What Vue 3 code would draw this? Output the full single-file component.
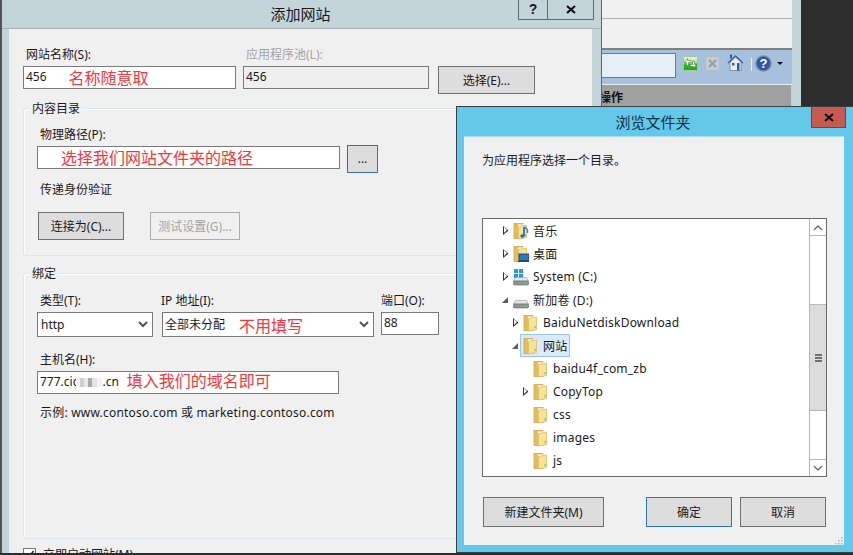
<template>
  <div class="desktop">
    <!-- 后面的 IIS 管理器窗口 -->
    <div class="manager-window">
      <div class="manager-main">
        <div class="manager-menu"></div>
        <div class="manager-blank"></div>
        <div class="manager-toolbar">
          <div class="address-input"></div>
          <svg class="tool-icon" width="15" height="15" viewBox="0 0 15 15">
            <defs>
              <linearGradient id="greenBtn" x1="0" y1="0" x2="0" y2="1">
                <stop offset="0" stop-color="#eef8e8" />
                <stop offset="0.45" stop-color="#a4e088" />
                <stop offset="0.55" stop-color="#2cc418" />
                <stop offset="1" stop-color="#10b00c" />
              </linearGradient>
            </defs>
            <rect x="0.5" y="0.5" width="14" height="14" rx="1" fill="url(#greenBtn)" stroke="#a8c4a0" />
            <path d="M1.5 6.5 L4.5 2.5 L4.5 4.5 L8 4.5 L8 6.5 L5.5 6.5 L5.5 9.5 L3.5 9.5 L3.5 6.5 Z" fill="#fff" stroke="#1b4a14" stroke-width="0.4" />
            <path d="M13.5 8.5 L10.5 12.5 L10.5 10.5 L7 10.5 L7 8.5 L9.5 8.5 L9.5 5.5 L11.5 5.5 L11.5 8.5 Z" fill="#fff" stroke="#1b4a14" stroke-width="0.4" />
          </svg>
          <svg class="tool-icon" width="15" height="15" viewBox="0 0 15 15">
            <rect x="0.5" y="0.5" width="14" height="14" rx="1" fill="#c4ccd4" stroke="#b4bcc4" />
            <path d="M4 4 L11 11 M11 4 L4 11" stroke="#98a0a8" stroke-width="2.4" />
          </svg>
          <svg class="tool-icon home" width="17" height="17" viewBox="0 0 17 17">
            <path d="M3 8 L3 16.5 L14 16.5 L14 8 L8.5 3 Z" fill="#e8edf2" stroke="#6f8296" stroke-width="0.8" />
            <path d="M1 9 L8.5 2 L16 9" fill="none" stroke="#3b62b8" stroke-width="1.6" />
            <rect x="3" y="0.5" width="2" height="4" fill="#2f5ab0" />
            <rect x="5" y="9" width="2.5" height="2.5" fill="#3d5f8c" />
            <rect x="10" y="9" width="2.5" height="7.5" fill="#2f5f9a" />
          </svg>
          <div class="tool-sep"></div>
          <svg class="help-icon" width="17" height="17" viewBox="0 0 17 17">
            <circle cx="8.5" cy="8.5" r="7.6" fill="#2a59ad" stroke="#8a8f98" stroke-width="1.4" />
            <text x="8.5" y="13" text-anchor="middle" class="help-mark">?</text>
          </svg>
          <div class="tool-arrow"></div>
        </div>
        <div class="manager-head">操作</div>
      </div>
    </div>

    <!-- 添加网站 -->
    <section class="site-dialog">
      <header class="site-title">
        <span>添加网站</span>
        <div class="title-buttons">
          <div class="title-btn help-btn">?</div>
          <div class="title-btn close-btn">
            <svg width="12" height="9" viewBox="0 0 12 9"><path d="M2 1 L10 8 M10 1 L2 8" stroke="#111" stroke-width="2.2" /></svg>
          </div>
        </div>
      </header>

      <div class="site-body">
        <div class="top-row">
          <div class="field name-field">
            <label>网站名称(S):</label>
            <div class="input">456<span class="note name-note">名称随意取</span></div>
          </div>
          <div class="field pool-field">
            <label class="muted">应用程序池(L):</label>
            <div class="input readonly">456</div>
          </div>
          <button class="btn pick-btn">选择(E)...</button>
        </div>

        <div class="group content-group">
          <div class="legend">内容目录</div>
          <label class="group-label">物理路径(P):</label>
          <div class="path-row">
            <div class="input path-input"><span class="note path-note">选择我们网站文件夹的路径</span></div>
            <button class="btn dots-btn">...</button>
          </div>
          <div class="group-label auth-label">传递身份验证</div>
          <div class="auth-row">
            <button class="btn connect-btn">连接为(C)...</button>
            <button class="btn test-btn">测试设置(G)...</button>
          </div>
        </div>

        <div class="group binding-group">
          <div class="legend">绑定</div>
          <div class="binding-row">
            <div class="field type-field">
              <label>类型(T):</label>
              <div class="select">
                <span>http</span>
                <svg width="10" height="7" viewBox="0 0 10 7"><path d="M1 1 L5 5 L9 1" fill="none" stroke="#555" stroke-width="2" /></svg>
              </div>
            </div>
            <div class="field ip-field">
              <label>IP 地址(I):</label>
              <div class="select">
                <span class="ip-value">全部未分配<span class="note ip-note">不用填写</span></span>
                <svg width="10" height="7" viewBox="0 0 10 7"><path d="M1 1 L5 5 L9 1" fill="none" stroke="#555" stroke-width="2" /></svg>
              </div>
            </div>
            <div class="field port-field">
              <label>端口(O):</label>
              <div class="input">88</div>
            </div>
          </div>
          <label class="group-label host-label">主机名(H):</label>
          <div class="input host-input">777.cic<span class="mosaic"></span>.cn<span class="note host-note">填入我们的域名即可</span></div>
          <div class="group-label example">示例: www.contoso.com 或 marketing.contoso.com</div>
        </div>

        <div class="start-row">
          <div class="check">
            <svg width="11" height="11" viewBox="0 0 11 11"><path d="M2 6 L4.5 9 L9.5 2" fill="none" stroke="#333" stroke-width="1.8" /></svg>
          </div>
          <span>立即启动网站(M)</span>
        </div>
      </div>
    </section>

    <!-- 浏览文件夹 -->
    <section class="browse-dialog">
      <header class="browse-title">
        <span>浏览文件夹</span>
        <div class="browse-close">
          <svg width="12" height="9" viewBox="0 0 12 9"><path d="M2 1 L10 8 M10 1 L2 8" stroke="#111" stroke-width="2.2" /></svg>
        </div>
      </header>

      <div class="browse-body">
        <div class="browse-hint">为应用程序选择一个目录。</div>

        <div class="tree-box">
          <div class="tree">
            <div
              v-for="row in treeRows"
              :key="row.name"
              class="tree-row"
              :style="{ paddingLeft: row.level * 10 + 20 + 'px' }"
            >
              <span class="twisty" :class="row.twisty"></span>
              <div class="row-item" :class="{ selected: row.selected }">
                <svg v-if="row.icon === 'drive-c' || row.icon === 'drive-d'" class="row-icon" width="16" height="18" viewBox="0 0 16 18">
                  <g v-if="row.icon === 'drive-c'">
                    <rect x="1" y="1" width="4" height="4" fill="#1f9be0" />
                    <rect x="6" y="1" width="4" height="4" fill="#1f9be0" />
                    <rect x="1" y="6" width="4" height="4" fill="#1f9be0" />
                    <rect x="6" y="6" width="4" height="4" fill="#1f9be0" />
                  </g>
                  <path d="M2.5 9.5 L13.5 9.5 L15.5 13 L0.5 13 Z" fill="#e4e6e8" stroke="#9a9da0" stroke-width="0.6" />
                  <rect x="0.5" y="13" width="15" height="4" rx="1" fill="#8f9498" stroke="#63686c" stroke-width="0.6" />
                  <rect x="11.5" y="14.5" width="2" height="1.4" fill="#5fe04a" />
                </svg>
                <svg v-else class="row-icon" width="16" height="18" viewBox="0 0 16 18">
                  <rect x="1" y="1.5" width="9" height="15" fill="#e2bd5e" stroke="#cfa94f" stroke-width="0.8" />
                  <rect x="5" y="2.5" width="6" height="3" fill="#fffdf4" />
                  <path d="M5.5 4.5 L13.5 3 L13.5 15.5 L5.5 17 Z" fill="#f8e396" stroke="#dcbd62" stroke-width="0.8" />
                  <rect x="11.6" y="12" width="1.2" height="2.2" fill="#6fb0dc" />
                  <g v-if="row.icon === 'music'">
                    <path d="M11 5 L11 13.5" stroke="#2376c8" stroke-width="1.8" />
                    <path d="M11 5 C14 6 15 8 14.5 11" fill="none" stroke="#2f8ede" stroke-width="1.4" />
                    <ellipse cx="9.5" cy="14" rx="2.2" ry="1.7" fill="#1e6dbd" />
                  </g>
                  <g v-if="row.icon === 'desktop'">
                    <rect x="6" y="9" width="10" height="6.5" fill="#2a79c8" stroke="#22344c" stroke-width="0.8" />
                    <rect x="5" y="15.5" width="11" height="1.5" fill="#3a4652" />
                  </g>
                </svg>
                <span class="row-name">{{ row.name }}</span>
              </div>
            </div>
          </div>
          <div class="scrollbar">
            <div class="scroll-btn">
              <svg width="10" height="7" viewBox="0 0 10 7"><path d="M1 6 L5 2 L9 6" fill="none" stroke="#666" stroke-width="1.3" /></svg>
            </div>
            <div class="scroll-track top"></div>
            <div class="scroll-thumb"><i></i><i></i><i></i></div>
            <div class="scroll-track bottom"></div>
            <div class="scroll-btn last">
              <svg width="10" height="7" viewBox="0 0 10 7"><path d="M1 1 L5 5 L9 1" fill="none" stroke="#666" stroke-width="1.3" /></svg>
            </div>
          </div>
        </div>

        <div class="browse-actions">
          <button class="btn new-btn">新建文件夹(M)</button>
          <div class="actions-right">
            <button class="btn ok-btn">确定</button>
            <button class="btn cancel-btn">取消</button>
          </div>
        </div>

        <svg class="grip" width="9" height="9" viewBox="0 0 9 9">
          <g fill="#b4b4b4">
            <rect x="7" y="1" width="1.5" height="1.5" />
            <rect x="7" y="4" width="1.5" height="1.5" />
            <rect x="7" y="7" width="1.5" height="1.5" />
            <rect x="4" y="4" width="1.5" height="1.5" />
            <rect x="4" y="7" width="1.5" height="1.5" />
            <rect x="1" y="7" width="1.5" height="1.5" />
          </g>
        </svg>
      </div>
    </section>
  </div>
</template>

<script setup>
const treeRows = [
  { name: '音乐', level: 0, twisty: 'closed', icon: 'music' },
  { name: '桌面', level: 0, twisty: 'closed', icon: 'desktop' },
  { name: 'System (C:)', level: 0, twisty: 'closed', icon: 'drive-c' },
  { name: '新加卷 (D:)', level: 0, twisty: 'open', icon: 'drive-d' },
  { name: 'BaiduNetdiskDownload', level: 1, twisty: 'closed', icon: 'folder' },
  { name: '网站', level: 1, twisty: 'open', icon: 'folder', selected: true },
  { name: 'baidu4f_com_zb', level: 2, twisty: '', icon: 'folder' },
  { name: 'CopyTop', level: 2, twisty: 'closed', icon: 'folder' },
  { name: 'css', level: 2, twisty: '', icon: 'folder' },
  { name: 'images', level: 2, twisty: '', icon: 'folder' },
  { name: 'js', level: 2, twisty: '', icon: 'folder' },
]
</script>

<style>
html,
body {
  margin: 0;
  overflow: hidden;
}
</style>

<style scoped>
.desktop {
  position: relative;
  width: 853px;
  height: 555px;
  overflow: hidden;
  background: #2d2d2d;
  font-family: "Noto Sans", "Noto Sans CJK SC", sans-serif;
  font-size: 12px;
  color: #1a1a1a;
}

label {
  display: block;
}

/* 后面的窗口 */
.manager-window {
  position: absolute;
  left: 590px;
  top: 0;
  width: 211px;
  height: 553px;
  background: #c3d5db;
}

.manager-main {
  width: 202px;
  display: flex;
  flex-direction: column;
}

.manager-menu {
  height: 18px;
  background: #f0f0f0;
  border-bottom: 1px solid #b2b2b2;
}

.manager-blank {
  height: 29px;
  background: #f0f0f0;
  border-bottom: 2px solid #808080;
}

.manager-toolbar {
  height: 31px;
  padding-top: 3px;
  background: #a7c0dc;
  border-bottom: 1px solid #e6edf4;
  display: flex;
  align-items: flex-start;
}

.address-input {
  width: 84px;
  height: 23px;
  background: #e6eef7;
  border: 1px solid #6d7a8a;
  flex-shrink: 0;
}

.tool-icon {
  margin-top: 3px;
  margin-left: 7px;
  flex-shrink: 0;
}

.tool-icon.home {
  margin-top: 1px;
}

.tool-sep {
  width: 1px;
  height: 13px;
  margin-top: 5px;
  margin-left: 7px;
  background: #e8eff6;
}

.help-icon {
  margin-top: 2px;
  margin-left: 3px;
}

.help-mark {
  font-family: "Liberation Sans", sans-serif;
  font-size: 13px;
  font-weight: bold;
  fill: #fff;
}

.tool-arrow {
  width: 0;
  height: 0;
  margin-top: 9px;
  margin-left: 5px;
  border-left: 3px solid transparent;
  border-right: 3px solid transparent;
  border-top: 3px solid #111;
}

.manager-head {
  height: 26px;
  margin-right: 1px;
  padding-left: 9px;
  background: #a0a0a0;
  font-weight: bold;
  font-size: 12px;
  line-height: 26px;
  color: #111;
}

/* 添加网站对话框 */
.site-dialog {
  position: absolute;
  left: 0;
  top: 0;
  width: 599px;
  height: 553px;
  background: #c3d5db;
  border-left: 2px solid #555;
  border-right: 1px solid #5b6a70;
  display: flex;
  flex-direction: column;
}

.site-title {
  position: relative;
  height: 28px;
  padding-right: 2px;
  flex-shrink: 0;
  border-bottom: 1px solid #a9b1b6;
  text-align: center;
  font-size: 15px;
  line-height: 28px;
}

.title-buttons {
  position: absolute;
  top: 0;
  right: 7px;
  display: flex;
}

.title-btn {
  height: 19px;
  border: 1px solid #5b6a70;
  border-top: none;
  display: flex;
  align-items: center;
  justify-content: center;
}

.help-btn {
  width: 28px;
  border-right: none;
  font-family: "Liberation Sans", sans-serif;
  font-size: 14px;
  font-weight: bold;
  line-height: 19px;
}

.close-btn {
  width: 45px;
}

.site-body {
  flex: 1;
  margin: 0 9px 0 7px;
  padding: 17px 0 0 14px;
  background: #f0f0f0;
  display: flex;
  flex-direction: column;
  overflow: hidden;
}

.top-row {
  display: flex;
  align-items: flex-start;
  flex-shrink: 0;
}

.field > label {
  height: 20px;
  line-height: 17px;
  padding-left: 3px;
}

.muted {
  color: #a3a3a3;
}

.name-field {
  width: 213px;
}

.pool-field {
  width: 186px;
  margin-left: 7px;
}

.input {
  box-sizing: border-box;
  height: 23px;
  padding-left: 2px;
  background: #fff;
  border: 1px solid #7a7a7a;
  line-height: 20px;
  white-space: nowrap;
}

.readonly {
  background: #efefef;
}

/* 红色批注不参与行高计算，只按基线微调 */
.note {
  font-size: 16px;
  color: #f7353b;
  font-family: "Noto Sans CJK SC", sans-serif;
  line-height: 0;
  vertical-align: -3px;
}

.name-note {
  margin-left: 22px;
}

.path-note {
  margin-left: 21px;
}

.ip-note {
  margin-left: 14px;
}

.host-note {
  margin-left: 8px;
  vertical-align: -1px;
}

.btn {
  box-sizing: border-box;
  height: 28px;
  padding: 0;
  background: #dddddd;
  border: 1px solid #707070;
  font: inherit;
  color: #1a1a1a;
  flex-shrink: 0;
}

.pick-btn {
  width: 97px;
  margin-top: 20px;
  margin-left: 9px;
}

.group {
  position: relative;
  box-sizing: border-box;
  flex-shrink: 0;
  width: 590px;
  padding-left: 13px;
  border: 1px solid #dde4ea;
  border-radius: 3px;
  box-shadow: inset 1px 1px 0 #fff;
}

.legend {
  position: absolute;
  top: -9px;
  left: 6px;
  padding: 0 2px;
  background: #f0f0f0;
  line-height: 17px;
}

.content-group {
  height: 148px;
  margin-top: 14px;
  padding-top: 17px;
}

.group-label {
  height: 20px;
  line-height: 17px;
  padding-left: 3px;
}

.path-row {
  display: flex;
  align-items: flex-start;
}

.path-input {
  width: 303px;
}

.dots-btn {
  width: 31px;
  margin-top: -1px;
  margin-left: 7px;
  border-color: #3a6ea5;
  line-height: 20px;
}

.auth-label {
  margin-top: 8px;
  height: 31px;
}

.auth-row {
  display: flex;
  align-items: flex-start;
}

.connect-btn {
  width: 86px;
  margin-left: 1px;
}

.test-btn {
  width: 90px;
  margin-left: 26px;
  color: #a3a3a3;
  background: #f0f0f0;
  border-color: #adadad;
}

.binding-group {
  height: 266px;
  margin-top: 17px;
  padding-top: 18px;
}

.binding-row {
  display: flex;
  align-items: flex-start;
}

.select {
  box-sizing: border-box;
  height: 25px;
  padding: 0 4px 0 3px;
  background: #fff;
  border: 1px solid #7a7a7a;
  display: flex;
  align-items: center;
  justify-content: space-between;
  white-space: nowrap;
}

.ip-value {
  padding-bottom: 2px;
}

.type-field {
  width: 116px;
}

.ip-field {
  width: 212px;
  margin-left: 9px;
}

.ip-field > label {
  padding-left: 0;
  margin-left: -1px;
}

.ip-field .select {
  padding-left: 2px;
}

.port-field {
  width: 58px;
  margin-left: 7px;
}

.port-field > label {
  padding-left: 0;
}

.host-label {
  margin-top: 14px;
}

.host-input {
  width: 302px;
}

.mosaic {
  display: inline-block;
  width: 26px;
  height: 9px;
  margin-left: -2px;
  vertical-align: -1px;
  background: linear-gradient(90deg, #f4f4f4 0 15%, #cfcfcf 15% 30%, #e9e9e9 30% 45%, #a9a9a9 45% 60%, #e4e4e4 60% 80%, #f2f2f2 80%);
}

.example {
  margin-top: 10px;
  letter-spacing: 0.2px;
  white-space: nowrap;
}

.start-row {
  display: flex;
  align-items: flex-start;
  flex-shrink: 0;
  margin-top: 9px;
}

.check {
  box-sizing: border-box;
  width: 13px;
  height: 13px;
  background: #fff;
  border: 1px solid #7a7a7a;
  flex-shrink: 0;
}

.check svg {
  display: block;
}

.start-row span {
  margin-left: 7px;
  line-height: 13px;
}

/* 浏览文件夹对话框 */
.browse-dialog {
  position: absolute;
  left: 456px;
  top: 106px;
  width: 397px;
  height: 447px;
  box-sizing: border-box;
  padding: 0 9px 7px 7px;
  background: #63c8ea;
  border-left: 1px solid #3a3f42;
  border-top: 1px solid #3a3f42;
  border-bottom: 1px solid #3a3f42;
  display: flex;
  flex-direction: column;
}

.browse-title {
  position: relative;
  height: 29px;
  padding-right: 2px;
  flex-shrink: 0;
  text-align: center;
  font-size: 15px;
  line-height: 31px;
  color: #10323f;
}

.browse-close {
  position: absolute;
  top: 0;
  right: -2px;
  width: 33px;
  height: 20px;
  background: #c75b52;
  border: 1px solid #55504f;
  border-top: none;
  display: flex;
  align-items: center;
  justify-content: center;
}

.browse-body {
  position: relative;
  flex: 1;
  background: #f0f0f0;
  border-top: 1px solid #a9dcef;
  padding: 15px 18px 0 18px;
}

.browse-hint {
  height: 66px;
  line-height: 17px;
}

.tree-box {
  box-sizing: border-box;
  height: 259px;
  width: 345px;
  background: #fff;
  border: 1px solid #6a6a6a;
  display: flex;
}

.tree {
  flex: 1;
  min-width: 0;
  overflow: hidden;
}

.tree-row {
  height: 23px;
  display: flex;
  align-items: center;
}

.twisty {
  width: 5px;
  height: 9px;
  margin-right: 2px;
  flex-shrink: 0;
  position: relative;
}

.twisty.closed {
  box-sizing: border-box;
  border-left: 5px solid #333;
  border-top: 4.5px solid transparent;
  border-bottom: 4.5px solid transparent;
}

.twisty.closed::after {
  content: '';
  position: absolute;
  left: -4px;
  top: -3px;
  border-left: 3px solid #fff;
  border-top: 3px solid transparent;
  border-bottom: 3px solid transparent;
}

.twisty.open::after {
  content: '';
  position: absolute;
  left: -1px;
  top: 2px;
  border-bottom: 6px solid #5c5c5c;
  border-left: 6px solid transparent;
}

.row-item {
  box-sizing: border-box;
  height: 23px;
  padding-left: 2px;
  padding-right: 2px;
  display: flex;
  align-items: center;
  border: 1px solid transparent;
  white-space: nowrap;
}

.row-item.selected {
  background: #d9ebfb;
  border-color: #99c8ef;
}

.row-icon {
  flex-shrink: 0;
}

.row-name {
  margin-left: 4px;
  letter-spacing: 0.2px;
}

.scrollbar {
  width: 17px;
  flex-shrink: 0;
  display: flex;
  flex-direction: column;
  border-left: 1px solid #b8b8b8;
  box-sizing: border-box;
}

.scroll-btn {
  box-sizing: border-box;
  height: 17px;
  flex-shrink: 0;
  border-bottom: 1px solid #b8b8b8;
  display: flex;
  align-items: center;
  justify-content: center;
}

.scroll-btn.last {
  border-bottom: none;
  border-top: 1px solid #b8b8b8;
}

.scroll-track.top {
  height: 68px;
}

.scroll-track.bottom {
  height: 48px;
}

.scroll-thumb {
  box-sizing: border-box;
  height: 107px;
  background: #dcdcdc;
  border-top: 1px solid #b8b8b8;
  border-bottom: 1px solid #b8b8b8;
  display: flex;
  flex-direction: column;
  align-items: center;
  justify-content: center;
  gap: 1px;
}

.scroll-thumb i {
  display: block;
  width: 7px;
  height: 2px;
  background: #707070;
}

.browse-actions {
  display: flex;
  justify-content: space-between;
  width: 343px;
  margin-top: 20px;
  margin-left: 1px;
}

.actions-right {
  display: flex;
  gap: 8px;
}

.new-btn {
  width: 121px;
  height: 30px;
}

.ok-btn,
.cancel-btn {
  width: 86px;
  height: 30px;
}

.ok-btn {
  border-color: #2f78ad;
}

.grip {
  position: absolute;
  right: 1px;
  bottom: 0;
}
</style>
